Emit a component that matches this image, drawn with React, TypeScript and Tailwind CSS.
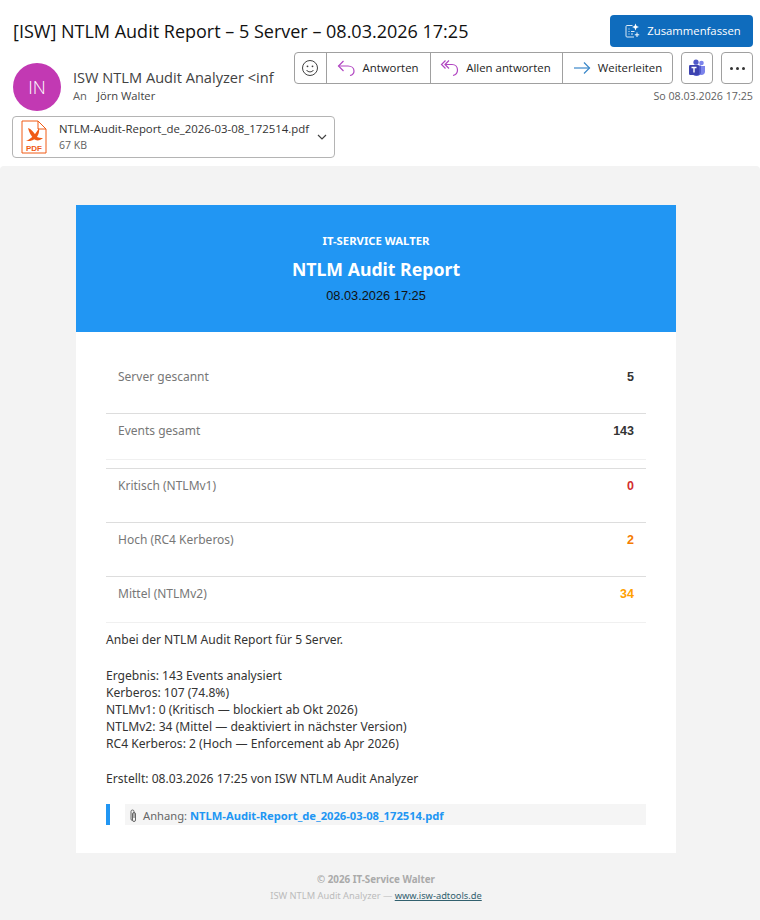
import React from "react";

const Body = '"Noto Sans", sans-serif';

function Row({ label, value, color }: { label: string; value: string; color: string }) {
  return (
    <div className="flex justify-between px-3 pt-[8px] text-[12px] h-[54px] border-b border-[#dddddd]">
      <span className="text-[#777777]">{label}</span>
      <span className={`font-bold text-[12.5px] ${color}`} style={{ fontFamily: '"Liberation Sans", sans-serif' }}>{value}</span>
    </div>
  );
}

function Reply({ color = "#b146c2" }: { color?: string }) {
  return (
    <svg width="20" height="20" viewBox="0 0 20 20" fill="none" stroke={color} strokeWidth="1.2">
      <path d="M7.5 3 L2.5 8 L7.5 13" />
      <path d="M2.5 8 H12 C15.5 8 18 10 18 13 C18 15.5 16.5 17 14 17.5" />
    </svg>
  );
}

function ReplyAll() {
  return (
    <svg width="20" height="20" viewBox="0 0 20 20" fill="none" stroke="#b146c2" strokeWidth="1.2">
      <path d="M5.5 2.5 L1.5 6.5 L5.5 10.5" />
      <path d="M9 2.5 L5 6.5 L9 10.5" />
      <path d="M5 6.5 H12 C15.5 6.5 17.5 9 17.5 12 C17.5 15 15.5 17 13 17.5" />
    </svg>
  );
}

function Forward() {
  return (
    <svg width="18" height="20" viewBox="0 0 18 20" fill="none" stroke="#3a87c9" strokeWidth="1.2">
      <path d="M1 10 H16.5" />
      <path d="M11 4.5 L16.5 10 L11 15.5" />
    </svg>
  );
}

export default function App() {
  return (
    <div className="w-[760px] h-[920px] overflow-hidden bg-white" style={{ fontFamily: Body }}>
      <div className="h-[166px] pl-[12px] pr-[7px] pt-[15px]" style={{ fontFamily: '"Open Sans", sans-serif' }}>
        <div className="flex justify-between h-[32px]">
          <div className="text-[18px] leading-[32px] text-[#111111] pl-px">[ISW] NTLM Audit Report – 5 Server – 08.03.2026 17:25</div>
          <button className="w-[143px] h-[32px] rounded-[4px] bg-[#0f6cbd] text-white text-[11.3px] flex items-center justify-center gap-[7px] pl-[2px]">
            <svg width="16" height="16" viewBox="0 0 16 16" fill="none" stroke="#dce9f5" strokeWidth="1">
              <path d="M8.5 2.5 H3 A1 1 0 0 0 2 3.5 V13 A1 1 0 0 0 3 14 H10" />
              <path d="M4.5 6 H5.5 M4.5 8.5 H5.5 M4.5 11 H5.5 M7 8.5 H10.5 M7 11 H9" />
              <path d="M11.5 0.5 L12.5 3 L15 4 L12.5 5 L11.5 7.5 L10.5 5 L8 4 L10.5 3 Z" fill="#ffffff" stroke="none" />
              <path d="M13 9.5 V14 M10.8 11.8 H15.2" stroke="#ffffff" />
            </svg>
            Zusammenfassen
          </button>
        </div>
        <div className="flex mt-[5px]">
          <div className="w-[48px] h-[48px] rounded-full bg-[#c239b3] text-white text-[18px] flex items-center justify-center mt-[11px] ml-px font-light shrink-0">IN</div>
          <div className="ml-[12px] mr-[21px] flex-1 min-w-0 pt-[15px]">
            <div className="text-[14.6px] leading-[20px] text-[#424242] whitespace-nowrap">ISW NTLM Audit Analyzer &lt;inf</div>
            <div className="text-[11.2px] leading-[16px] mt-[1px] text-[#424242] whitespace-nowrap"><span className="text-[#616161] mr-[10px]">An</span>Jörn Walter</div>
          </div>
          <div className="shrink-0 flex flex-col items-end">
            <div className="flex gap-[8px]">
              <div className="flex h-[32px] w-[379px] border border-[#a0a0a0] rounded-[4px] text-[11.4px] text-[#242424] bg-white">
                <div className="w-[32px] flex items-center justify-center border-r border-[#a0a0a0]">
                  <svg width="18" height="18" viewBox="0 0 18 18" fill="none" stroke="#424242" strokeWidth="1" className="-ml-[1px]">
                    <circle cx="9" cy="9" r="7.5" />
                    <circle cx="6.5" cy="7.3" r="0.9" fill="#424242" stroke="none" />
                    <circle cx="11.5" cy="7.3" r="0.9" fill="#424242" stroke="none" />
                    <path d="M5.5 11 C7 13.5 11 13.5 12.5 11" />
                  </svg>
                </div>
                <div className="w-[104px] flex items-center justify-center gap-[6px] pr-[2px] border-r border-[#a0a0a0]"><Reply />Antworten</div>
                <div className="w-[132px] flex items-center justify-center gap-[6px] pr-[2px] border-r border-[#a0a0a0]"><ReplyAll />Allen antworten</div>
                <div className="flex-1 flex items-center justify-center gap-[7px]"><Forward />Weiterleiten</div>
              </div>
              <div className="w-[32px] h-[32px] border border-[#a0a0a0] rounded-[4px] flex items-center justify-center">
                <svg width="18" height="18" viewBox="0 0 18 18">
                  <circle cx="13.5" cy="4" r="2.3" fill="#7b83eb" />
                  <path d="M10 7 H17 V12.5 C17 14.5 15.5 16 13.5 16 C11.5 16 10 14.5 10 12.5 Z" fill="#7b83eb" />
                  <circle cx="8" cy="3.2" r="2.6" fill="#5059c9" />
                  <path d="M4 6.5 H13 V13 C13 15.5 11 17 8.5 17 C6 17 4 15.5 4 13 Z" fill="#5059c9" />
                  <rect x="1" y="6" width="10" height="10" rx="1.2" fill="#3d43b0" />
                  <path d="M3.5 8.5 H8.5 M6 8.5 V13.5" stroke="white" strokeWidth="1.4" />
                </svg>
              </div>
              <div className="w-[32px] h-[32px] border border-[#a0a0a0] rounded-[4px] flex items-center justify-center gap-[3px]">
                <span className="w-[3px] h-[3px] rounded-full bg-[#333333]" />
                <span className="w-[3px] h-[3px] rounded-full bg-[#333333]" />
                <span className="w-[3px] h-[3px] rounded-full bg-[#333333]" />
              </div>
            </div>
            <div className="text-[10.7px] leading-[16px] mt-[4px] text-[#616161]">So 08.03.2026 17:25</div>
          </div>
        </div>
        <div className="mt-[5px] w-[323px] h-[42px] border border-[#b4b4b4] rounded-[4px] flex items-center pl-[8px] pr-[6px]">
          <svg width="26" height="34" viewBox="0 0 26 34" className="shrink-0">
            <path d="M1 1 H17 L25 9 V33 H1 Z" fill="white" stroke="#f05a14" strokeWidth="1" />
            <path d="M17 1 V9 H25" fill="none" stroke="#f05a14" strokeWidth="1" />
            <path d="M5 21 C10 19 14 15 18 8 C19 13 16 20 9 21 Z" fill="#f05a14" />
            <path d="M7 8 C10 9 13 12 15 16 C17 18 20 18 22 18 C19 21 15 21 13 19 C10 16 8 12 7 8 Z" fill="#f05a14" />
            <text x="13" y="31" textAnchor="middle" fontSize="8" fontWeight="700" fill="#f05a14" style={{ fontFamily: '"Liberation Sans", sans-serif' }}>PDF</text>
          </svg>
          <div className="ml-[12px] flex-1 min-w-0">
            <div className="text-[11.4px] leading-[16px] text-[#333333] whitespace-nowrap">NTLM-Audit-Report_de_2026-03-08_172514.pdf</div>
            <div className="text-[10.5px] leading-[16px] text-[#616161]">67 KB</div>
          </div>
          <svg width="12" height="12" viewBox="0 0 12 12" fill="none" stroke="#424242" strokeWidth="1.2" className="shrink-0">
            <path d="M2 4 L6 8 L10 4" />
          </svg>
        </div>
      </div>

      <div className="h-[754px] bg-[#f3f3f3] rounded-t-[4px] pt-[39px]">
        <div className="w-[600px] ml-[76px] bg-white h-[648px]">
          <div className="h-[127px] bg-[#2196f3] text-center pt-[28px]">
            <div className="text-[11.3px] leading-[16px] font-bold text-white">IT-SERVICE WALTER</div>
            <div className="text-[17.7px] leading-[24px] font-bold text-white mt-[8px]">NTLM Audit Report</div>
            <div className="text-[12.8px] leading-[16px] text-[#111111] mt-[7px]" style={{ fontFamily: '"Liberation Sans", sans-serif' }}>08.03.2026 17:25</div>
          </div>
          <div className="px-[30px] pt-[28px]">
            <Row label="Server gescannt" value="5" color="text-[#333333]" />
            <div className="flex justify-between px-3 pt-[8px] text-[12px] h-[46px] border-b border-[#f0f0f0]">
              <span className="text-[#777777]">Events gesamt</span>
              <span className="font-bold text-[12.5px] text-[#333333]" style={{ fontFamily: '"Liberation Sans", sans-serif' }}>143</span>
            </div>
            <div className="h-[9px] border-b border-[#dddddd]" />
            <Row label="Kritisch (NTLMv1)" value="0" color="text-[#d32f2f]" />
            <Row label="Hoch (RC4 Kerberos)" value="2" color="text-[#f57c00]" />
            <div className="flex justify-between px-3 pt-[8px] text-[12px] h-[46px] border-b border-[#f0f0f0]">
              <span className="text-[#777777]">Mittel (NTLMv2)</span>
              <span className="font-bold text-[12.5px] text-[#ffa000]" style={{ fontFamily: '"Liberation Sans", sans-serif' }}>34</span>
            </div>
            <div className="mt-[8px] text-[12.1px] leading-[17px] text-[#333333]">
              <p>Anbei der NTLM Audit Report für 5 Server.</p>
              <p className="mt-[19px]">Ergebnis: 143 Events analysiert</p>
              <p>Kerberos: 107 (74.8%)</p>
              <p>NTLMv1: 0 (Kritisch — blockiert ab Okt 2026)</p>
              <p>NTLMv2: 34 (Mittel — deaktiviert in nächster Version)</p>
              <p>RC4 Kerberos: 2 (Hoch — Enforcement ab Apr 2026)</p>
              <p className="mt-[18px]">Erstellt: 08.03.2026 17:25 von ISW NTLM Audit Analyzer</p>
            </div>
            <div className="mt-[17px] flex h-[21px]">
              <div className="w-[4px] bg-[#2196f3]" />
              <div className="ml-[15px] flex-1 bg-[#f5f5f5] pl-[3px] pt-[2px] text-[11.2px] leading-[19px] text-[#666666] flex items-center whitespace-nowrap">
                <svg width="10" height="14" viewBox="0 0 10 14" fill="none" stroke="#666666" strokeWidth="1" className="mr-[5px] shrink-0">
                  <path d="M3 4 V2.5 A1.5 1.5 0 0 1 6 2.5 V9" />
                  <path d="M4.5 5 V11 A1.5 1.5 0 0 0 7.5 11 V5 A1.5 1.5 0 0 0 4.5 5" />
                  <path d="M3 4 V10 A1.5 1.5 0 0 0 4.5 11.5" />
                </svg>
                Anhang:&nbsp;<span className="font-bold text-[#2196f3]">NTLM-Audit-Report_de_2026-03-08_172514.pdf</span>
              </div>
            </div>
          </div>
        </div>
        <div className="w-[600px] ml-[76px] text-center mt-[19px] leading-[16px]">
          <div className="font-bold text-[9.8px] text-[#aaaaaa]">© 2026 IT-Service Walter</div>
          <div className="text-[9.3px] text-[#bbbbbb]">ISW NTLM Audit Analyzer — <span className="underline text-[#31606e]">www.isw-adtools.de</span></div>
        </div>
      </div>
    </div>
  );
}
